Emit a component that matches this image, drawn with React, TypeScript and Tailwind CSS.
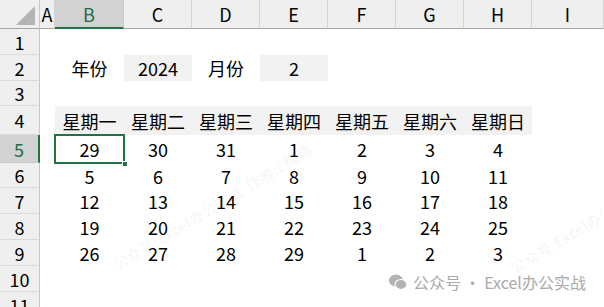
import React from "react";

const cols = ["A", "B", "C", "D", "E", "F", "G", "H", "I"];
const weekdays = ["星期一", "星期二", "星期三", "星期四", "星期五", "星期六", "星期日"];
const weeks = [
  [29, 30, 31, 1, 2, 3, 4],
  [5, 6, 7, 8, 9, 10, 11],
  [12, 13, 14, 15, 16, 17, 18],
  [19, 20, 21, 22, 23, 24, 25],
  [26, 27, 28, 29, 1, 2, 3],
];

const Cell = ({ children, className = "" }: { children?: React.ReactNode; className?: string }) => (
  <div className={`flex items-center justify-center leading-none ${className}`}>{children}</div>
);

const RowHead = ({ n, active }: { n: number; active?: boolean }) => (
  <Cell
    className={
      active
        ? "bg-[#d2d2d2] text-[#1e6c41] border-r-2 border-r-[#217346] border-b border-b-[#c6c6c6]"
        : "bg-[#efefef] border-r border-r-[#c8c8c8] border-b border-b-[#dadada]"
    }
  >
    {n}
  </Cell>
);

export default function App() {
  const rows: React.ReactNode[] = [];

  // header row
  rows.push(
    <React.Fragment key="h">
      <div className="relative bg-[#efefef] border-b border-b-[#a6a6a6] border-r border-r-[#c8c8c8]">
        <svg className="absolute right-[4px] bottom-[3px]" width="19" height="19" viewBox="0 0 19 19">
          <polygon points="19,0 19,19 0,19" fill="#b4b4b4" />
        </svg>
      </div>
      {cols.map((c) => (
        <Cell
          key={c}
          className={
            c === "B"
              ? "bg-[#d2d2d2] text-[#1e6c41] border-b-2 border-b-[#217346] border-r border-r-[#c8c8c8]"
              : "bg-[#efefef] border-b border-b-[#a6a6a6] border-r border-r-[#d4d4d4]"
          }
        >
          {c}
        </Cell>
      ))}
    </React.Fragment>
  );

  // rows 1-11
  for (let r = 1; r <= 11; r++) {
    let cells: React.ReactNode[] = [];
    if (r === 2) {
      cells = [
        <Cell key="a" />,
        <Cell key="b">年份</Cell>,
        <Cell key="c" className="bg-[#f2f2f2]">2024</Cell>,
        <Cell key="d">月份</Cell>,
        <Cell key="e" className="bg-[#f2f2f2]">2</Cell>,
        <Cell key="f" />,
        <Cell key="g" />,
        <Cell key="h" />,
        <Cell key="i" />,
      ];
    } else if (r === 4) {
      cells = [
        <Cell key="a" />,
        ...weekdays.map((w) => (
          <Cell key={w} className="bg-[#f2f2f2]">
            {w}
          </Cell>
        )),
        <Cell key="i" />,
      ];
    } else if (r >= 5 && r <= 9) {
      cells = [
        <Cell key="a" />,
        ...weeks[r - 5].map((d, i) =>
          r === 5 && i === 0 ? (
            <div key={i} className="relative flex items-center justify-center leading-none">
              {d}
              <div className="absolute -left-[1px] -top-[1px] right-[-1px] bottom-[-1px] border-2 border-[#217346]" />
              <div className="absolute right-[-4px] bottom-[-4px] w-[6px] h-[6px] bg-[#217346] border border-white" />
            </div>
          ) : (
            <Cell key={i}>{d}</Cell>
          )
        ),
        <Cell key="i" />,
      ];
    } else {
      cells = cols.map((c) => <Cell key={c} />);
    }
    rows.push(
      <React.Fragment key={r}>
        <RowHead n={r} active={r === 5} />
        {cells}
      </React.Fragment>
    );
  }

  return (
    <div className="relative w-[604px] h-[307px] overflow-hidden bg-white text-black text-[18px] font-['Noto_Sans_CJK_SC','Noto_Sans',sans-serif]">
      <div className="grid grid-cols-[40px_15px_69px_68px_68px_68px_68px_68px_68px_72px] grid-rows-[29px_26px_26px_25px_29px_28px_25px_26px_26px_26px_26px_26px]">
        {rows}
      </div>

      {/* faint diagonal watermark */}
      <div className="pointer-events-none absolute left-[115px] top-[255px] -rotate-[31deg] origin-left whitespace-nowrap text-[15px] font-bold text-black/[0.045]">
        公众号:Excel办公实战&nbsp;&nbsp;作者:E精精
      </div>
      <div className="pointer-events-none absolute left-[512px] top-[258px] -rotate-[31deg] origin-left whitespace-nowrap text-[15px] font-bold text-black/[0.045]">
        公众号:Excel办公实战&nbsp;&nbsp;作者:E精精
      </div>

      {/* bottom-right caption */}
      <div className="pointer-events-none absolute left-[389px] top-[274px] flex items-center gap-[6px] text-[16px] leading-none text-[#a9a9a9]">
        <svg width="18" height="16" viewBox="0 0 18 16">
          <ellipse cx="7" cy="6.5" rx="7" ry="6" fill="#b3b3b3" />
          <ellipse cx="12" cy="10.5" rx="6" ry="5" fill="#b3b3b3" stroke="#ffffff" strokeWidth="1.2" />
        </svg>
        <span>公众号 · Excel办公实战</span>
      </div>
    </div>
  );
}
